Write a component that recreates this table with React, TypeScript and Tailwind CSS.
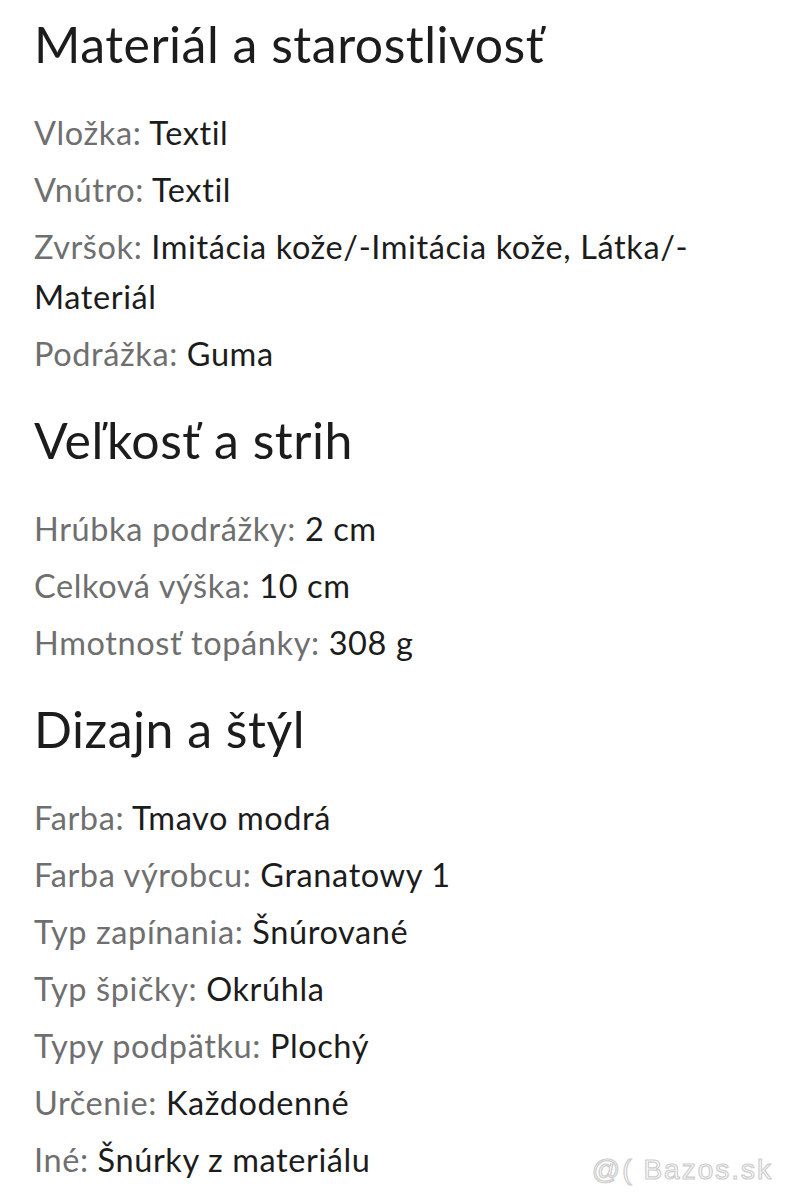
const sections: { title: string; rows: [string, string][] }[] = [
  {
    title: "Materiál a starostlivosť",
    rows: [
      ["Vložka:", "Textil"],
      ["Vnútro:", "Textil"],
      ["Zvršok:", "Imitácia kože/-Imitácia kože, Látka/-Materiál"],
      ["Podrážka:", "Guma"],
    ],
  },
  {
    title: "Veľkosť a strih",
    rows: [
      ["Hrúbka podrážky:", "2 cm"],
      ["Celková výška:", "10 cm"],
      ["Hmotnosť topánky:", "308 g"],
    ],
  },
  {
    title: "Dizajn a štýl",
    rows: [
      ["Farba:", "Tmavo modrá"],
      ["Farba výrobcu:", "Granatowy 1"],
      ["Typ zapínania:", "Šnúrované"],
      ["Typ špičky:", "Okrúhla"],
      ["Typy podpätku:", "Plochý"],
      ["Určenie:", "Každodenné"],
      ["Iné:", "Šnúrky z materiálu"],
    ],
  },
];

export default function App() {
  return (
    <div className="relative h-[1200px] w-[785px] overflow-hidden bg-white pt-[14px] pr-[34px] pl-[34px] font-['Lato',sans-serif] text-[#1c1c1c]">
      {sections.map((s, i) => (
        <section key={s.title} className={i > 0 ? "mt-[31px]" : ""}>
          <h2 className="text-[50px] leading-[60px] font-normal tracking-[0.5px]">{s.title}</h2>
          <div className="mt-[34px] flex flex-col gap-[7px]">
            {s.rows.map(([label, value]) => (
              <p key={label} className="text-[32.5px] leading-[50px] tracking-[0.6px]">
                <span className="text-[#6f6f6f]">{label}</span> {value}
              </p>
            ))}
          </div>
        </section>
      ))}
      <div className="absolute right-[12px] bottom-[16px] font-['Liberation_Sans',sans-serif] text-[28px] leading-none tracking-[2px] text-transparent [-webkit-text-stroke:1.2px_#cdcdcd]">
        @( Bazos.sk
      </div>
    </div>
  );
}
